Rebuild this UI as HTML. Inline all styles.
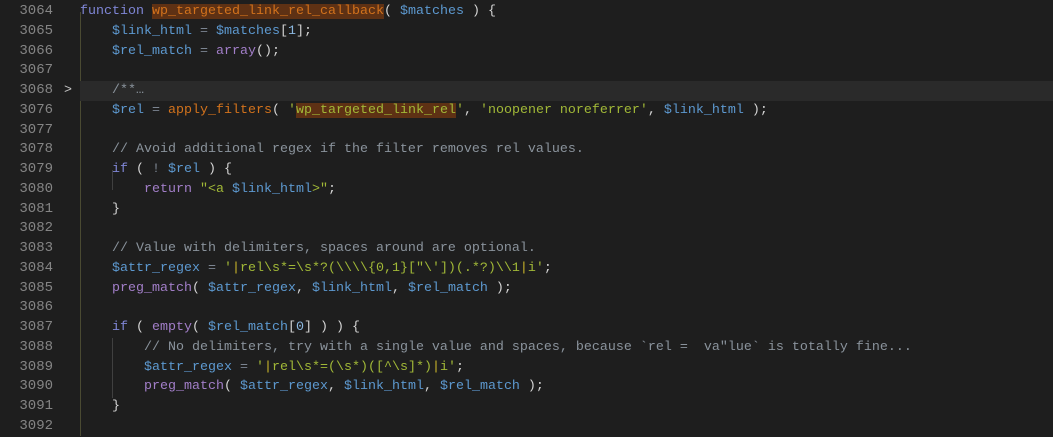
<!DOCTYPE html>
<html><head><style>
body{margin:0;background:#1e1e1e;width:1053px;height:436px;overflow:hidden;font-family:"Liberation Mono",monospace;font-size:13.33px;}
.r{position:absolute;left:0;height:19.76px;line-height:19.76px;white-space:pre;width:1053px}
.n{position:absolute;left:0;width:53px;text-align:right;color:#858585;font-size:14px}
.c{position:absolute;left:80px;color:#d4d4d4}
.k{color:#7f86d6}.v{color:#5d99d0}.f{color:#d2721c}.p{color:#a27ec8}.s{color:#a1b837}.cm{color:#8a939c}.o{color:#7c8591}.num{color:#8cb8e0}.y{color:#c9b52a}
.hl{background:#5e3114}
.g{position:absolute;width:1px;background:#4a4a32}
</style></head><body>
<div class="g" style="left:80px;top:12px;height:424px"></div>
<div class="g" style="left:112px;top:170px;height:20px;background:#404040"></div>
<div class="g" style="left:112px;top:338px;height:60px;background:#404040"></div>
<div id="w"></div>
<script>
const L=[
['3064','<span class="k">function</span> <span class="f hl">wp_targeted_link_rel_callback</span>( <span class="v">$matches</span> ) {'],
['3065','    <span class="v">$link_html</span> <span class="o">=</span> <span class="v">$matches</span>[<span class="num">1</span>];'],
['3066','    <span class="v">$rel_match</span> <span class="o">=</span> <span class="p">array</span>();'],
['3067',''],
['3068','    <span class="cm">/**…</span>'],
['3076','    <span class="v">$rel</span> <span class="o">=</span> <span class="f">apply_filters</span>( <span class="s">\'<span class="hl">wp_targeted_link_rel</span>\'</span>, <span class="s">\'noopener noreferrer\'</span>, <span class="v">$link_html</span> );'],
['3077',''],
['3078','    <span class="cm">// Avoid additional regex if the filter removes rel values.</span>'],
['3079','    <span class="k">if</span> ( <span class="o">!</span> <span class="v">$rel</span> ) {'],
['3080','        <span class="p">return</span> <span class="s">"&lt;a <span class="v">$link_html</span>&gt;"</span>;'],
['3081','    }'],
['3082',''],
['3083','    <span class="cm">// Value with delimiters, spaces around are optional.</span>'],
['3084','    <span class="v">$attr_regex</span> <span class="o">=</span> <span class="s">\'<span class="y">|</span>rel\\s*=\\s*?(\\\\\\\\{0,1}["\\\'])(.*?)\\\\1<span class="y">|</span>i\'</span>;'],
['3085','    <span class="p">preg_match</span>( <span class="v">$attr_regex</span>, <span class="v">$link_html</span>, <span class="v">$rel_match</span> );'],
['3086',''],
['3087','    <span class="k">if</span> ( <span class="p">empty</span>( <span class="v">$rel_match</span>[<span class="num">0</span>] ) ) {'],
['3088','        <span class="cm">// No delimiters, try with a single value and spaces, because `rel =  va"lue` is totally fine...</span>'],
['3089','        <span class="v">$attr_regex</span> <span class="o">=</span> <span class="s">\'<span class="y">|</span>rel\\s*=(\\s*)([^\\s]*)<span class="y">|</span>i\'</span>;'],
['3090','        <span class="p">preg_match</span>( <span class="v">$attr_regex</span>, <span class="v">$link_html</span>, <span class="v">$rel_match</span> );'],
['3091','    }'],
['3092','']];
let h='';
L.forEach((l,i)=>{const t=2+i*19.76;
if(i==4)h+='<div class="r" style="top:'+t+'px;background:#2a2a2a;left:80px;width:973px"></div>';
h+='<div class="r" style="top:'+t+'px"><span class="n">'+l[0]+'</span>'+(i==4?'<span style="position:absolute;left:64px;color:#c5c5c5">&gt;</span>':'')+'<span class="c">'+l[1]+'</span></div>';});
document.getElementById('w').innerHTML=h;
</script>
</body></html>
